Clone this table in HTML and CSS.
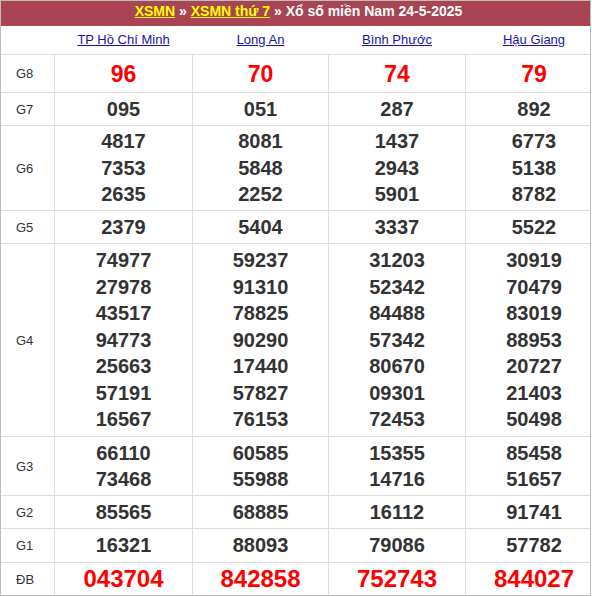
FILE: index.html
```html
<!DOCTYPE html>
<html lang="vi">
<head>
<meta charset="utf-8">
<title>XSMN thứ 7 - Xổ số miền Nam 24-5-2025</title>
<link rel="stylesheet" href="styles.css">
</head>
<body>
<div class="board">
  <div class="title">
    <a href="#" class="title-link">XSMN</a> » <a href="#" class="title-link">XSMN thứ 7</a> » Xổ số miền Nam 24-5-2025
  </div>
  <div class="provinces">
    <div class="prov-cell"></div>
    <div class="prov-cell"><a href="#" class="prov-link">TP Hồ Chí Minh</a></div>
    <div class="prov-cell"><a href="#" class="prov-link">Long An</a></div>
    <div class="prov-cell"><a href="#" class="prov-link">Bình Phước</a></div>
    <div class="prov-cell"><a href="#" class="prov-link">Hậu Giang</a></div>
  </div>
  <div class="results">
    <div class="label">G8</div>
    <div class="cell g8 red"><div>96</div></div>
    <div class="cell g8 red"><div>70</div></div>
    <div class="cell g8 red"><div>74</div></div>
    <div class="cell g8 red"><div>79</div></div>

    <div class="label">G7</div>
    <div class="cell"><div>095</div></div>
    <div class="cell"><div>051</div></div>
    <div class="cell"><div>287</div></div>
    <div class="cell"><div>892</div></div>

    <div class="label">G6</div>
    <div class="cell"><div>4817</div><div>7353</div><div>2635</div></div>
    <div class="cell"><div>8081</div><div>5848</div><div>2252</div></div>
    <div class="cell"><div>1437</div><div>2943</div><div>5901</div></div>
    <div class="cell"><div>6773</div><div>5138</div><div>8782</div></div>

    <div class="label">G5</div>
    <div class="cell"><div>2379</div></div>
    <div class="cell"><div>5404</div></div>
    <div class="cell"><div>3337</div></div>
    <div class="cell"><div>5522</div></div>

    <div class="label">G4</div>
    <div class="cell"><div>74977</div><div>27978</div><div>43517</div><div>94773</div><div>25663</div><div>57191</div><div>16567</div></div>
    <div class="cell"><div>59237</div><div>91310</div><div>78825</div><div>90290</div><div>17440</div><div>57827</div><div>76153</div></div>
    <div class="cell"><div>31203</div><div>52342</div><div>84488</div><div>57342</div><div>80670</div><div>09301</div><div>72453</div></div>
    <div class="cell"><div>30919</div><div>70479</div><div>83019</div><div>88953</div><div>20727</div><div>21403</div><div>50498</div></div>

    <div class="label">G3</div>
    <div class="cell"><div>66110</div><div>73468</div></div>
    <div class="cell"><div>60585</div><div>55988</div></div>
    <div class="cell"><div>15355</div><div>14716</div></div>
    <div class="cell"><div>85458</div><div>51657</div></div>

    <div class="label">G2</div>
    <div class="cell"><div>85565</div></div>
    <div class="cell"><div>68885</div></div>
    <div class="cell"><div>16112</div></div>
    <div class="cell"><div>91741</div></div>

    <div class="label">G1</div>
    <div class="cell"><div>16321</div></div>
    <div class="cell"><div>88093</div></div>
    <div class="cell"><div>79086</div></div>
    <div class="cell"><div>57782</div></div>

    <div class="label">ĐB</div>
    <div class="cell big red"><div>043704</div></div>
    <div class="cell big red"><div>842858</div></div>
    <div class="cell big red"><div>752743</div></div>
    <div class="cell big red"><div>844027</div></div>
  </div>
</div>
</body>
</html>
```

FILE: styles.css
```css
html, body {
  margin: 0;
  padding: 0;
  background: #fff;
}

body {
  font-family: "Liberation Sans", Arial, sans-serif;
  color: #333;
}

.board {
  width: 591px;
  height: 596px;
  box-sizing: border-box;
  border: 1px solid #bdbdbd;
  overflow: hidden;
  background: #fff;
}

.title {
  height: 25px;
  box-sizing: border-box;
  padding: 0 0 0 6px;
  background: #a94452;
  color: #fff;
  font-size: 14px;
  font-weight: bold;
  line-height: 21px;
  text-align: center;
  white-space: nowrap;
}

.title-link {
  color: #ff0;
  text-decoration: underline;
}

.provinces {
  display: grid;
  grid-template-columns: 53px 137px 135px 136px 136px;
  column-gap: 1px;
  width: 602px;
  height: 29px;
  box-sizing: border-box;
  border-bottom: 1px solid #ddd;
}

.prov-cell {
  text-align: center;
  line-height: 28px;
  font-size: 13px;
  white-space: nowrap;
}

.prov-link {
  color: #1414a8;
  text-decoration: underline;
}

.results {
  display: grid;
  grid-template-columns: 53px 137px 135px 136px 136px;
  grid-template-rows: 37px 32px 84px 32px 192px 58px 32px 33px 32px;
  gap: 1px;
  width: 602px;
  background: #ddd;
}

.label {
  background: #fff;
  display: flex;
  align-items: center;
  padding-left: 15px;
  font-size: 13px;
  color: #333;
}

.cell {
  background: #fff;
  display: flex;
  flex-direction: column;
  align-items: center;
  justify-content: center;
  font-size: 20px;
  font-weight: bold;
  line-height: 26.5px;
  color: #333;
}

.cell.g8 {
  font-size: 23px;
  line-height: 28px;
}

.cell.big {
  font-size: 24px;
  line-height: 28px;
}

.cell.red {
  color: #f00;
}
```
